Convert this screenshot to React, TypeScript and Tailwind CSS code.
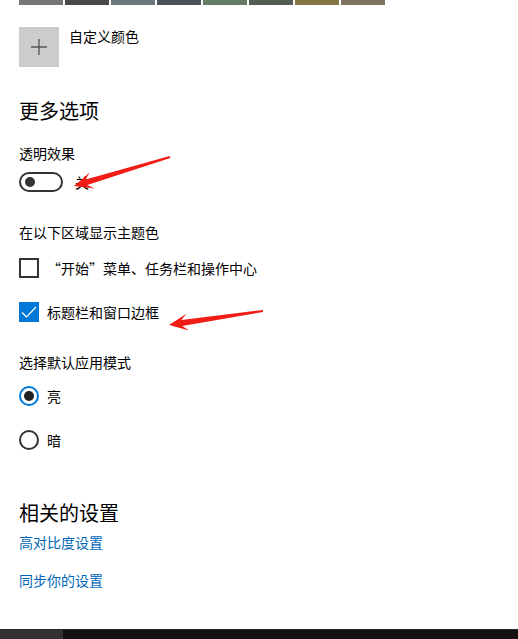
import React from 'react'

const swatches = ['#767676', '#4c4a48', '#69797e', '#4a5459', '#647c64', '#525e54', '#847545', '#7e735f']

// 红色手绘箭头：从尾部细线到箭头尖
function arrowPoints(tx: number, ty: number, hx: number, hy: number) {
  const len = Math.hypot(hx - tx, hy - ty)
  const dx = (hx - tx) / len
  const dy = (hy - ty) / len
  const nx = -dy
  const ny = dx
  const p = (x: number, y: number, back: number, side: number) =>
    `${(x - dx * back + nx * side).toFixed(1)},${(y - dy * back + ny * side).toFixed(1)}`
  return [
    p(tx, ty, 0, 1),
    p(hx, hy, 13, 3),
    p(hx, hy, 19, 8.5),
    p(hx, hy, 0, 0),
    p(hx, hy, 19, -8.5),
    p(hx, hy, 13, -3),
    p(tx, ty, 0, -1),
  ].join(' ')
}

function Toggle() {
  return (
    <div className="w-[44px] h-[20px] rounded-full border-2 border-[#333] flex items-center px-[4px]">
      <div className="w-[10px] h-[10px] rounded-full bg-[#333]" />
    </div>
  )
}

function Checkbox({ checked }: { checked?: boolean }) {
  if (checked) {
    return (
      <div className="w-[20px] h-[20px] bg-[#0078d7] flex items-center justify-center">
        <svg width="18" height="18" viewBox="0 0 18 18">
          <path d="M2 9.5 L6.5 14 L16 4" fill="none" stroke="white" strokeWidth="1.2" />
        </svg>
      </div>
    )
  }
  return <div className="w-[20px] h-[20px] border-2 border-[#333]" />
}

function Radio({ checked }: { checked?: boolean }) {
  return (
    <div
      className={
        checked
          ? 'w-[20px] h-[20px] rounded-full border-2 border-[#0078d7] flex items-center justify-center'
          : 'w-[20px] h-[20px] rounded-full border-2 border-[#333]'
      }
    >
      {checked && <div className="w-[10px] h-[10px] rounded-full bg-[#222]" />}
    </div>
  )
}

export default function App() {
  return (
    <div
      className="relative w-[518px] h-[639px] bg-white overflow-hidden text-black flex flex-col"
      style={{ fontFamily: '"Noto Sans CJK SC", "Noto Sans", sans-serif' }}
    >
      <div className="px-[19px] flex-1">
        {/* 颜色块 */}
        <div className="flex gap-[2px]">
          {swatches.map((c) => (
            <div key={c} className="w-[44px] h-[5px]" style={{ backgroundColor: c }} />
          ))}
        </div>

        {/* 自定义颜色 */}
        <div className="mt-[22px] flex items-start gap-[10px]">
          <div className="w-[40px] h-[40px] bg-[#cccccc] flex items-center justify-center">
            <svg width="18" height="18" viewBox="0 0 18 18">
              <path d="M9 1 V17 M1 9 H17" stroke="#555" strokeWidth="1.3" />
            </svg>
          </div>
          <span className="text-[14px] leading-[20px] -mt-[1px]">自定义颜色</span>
        </div>

        {/* 更多选项 */}
        <h2 className="mt-[30px] text-[20px] leading-[28px] font-normal">更多选项</h2>
        <div className="mt-[18px] text-[14px] leading-[20px]">透明效果</div>
        <div className="mt-[9px] flex items-center gap-[12px]">
          <Toggle />
          <span className="text-[14px] leading-[20px]">关</span>
        </div>

        <div className="mt-[30px] text-[14px] leading-[20px]">在以下区域显示主题色</div>
        <div className="mt-[16px] flex items-center gap-[8px]">
          <Checkbox />
          <span className="text-[14px] leading-[20px]">“开始”菜单、任务栏和操作中心</span>
        </div>
        <div className="mt-[24px] flex items-center gap-[8px]">
          <Checkbox checked />
          <span className="text-[14px] leading-[20px]">标题栏和窗口边框</span>
        </div>

        <div className="mt-[30px] text-[14px] leading-[20px]">选择默认应用模式</div>
        <div className="mt-[14px] flex items-center gap-[8px]">
          <Radio checked />
          <span className="text-[14px] leading-[20px]">亮</span>
        </div>
        <div className="mt-[24px] flex items-center gap-[8px]">
          <Radio />
          <span className="text-[14px] leading-[20px]">暗</span>
        </div>

        {/* 相关的设置 */}
        <h2 className="mt-[49px] text-[20px] leading-[28px] font-normal">相关的设置</h2>
        <div className="mt-[5px] text-[14px] leading-[20px] text-[#0067b8]">高对比度设置</div>
        <div className="mt-[18px] text-[14px] leading-[20px] text-[#0067b8]">同步你的设置</div>
      </div>

      {/* 底部任务栏 */}
      <div className="h-[10px] flex border-t border-[#1e2a28]">
        <div className="w-[63px] bg-[#333131]" />
        <div className="flex-1 bg-[#131111]" />
      </div>

      {/* 标注箭头 */}
      <svg className="absolute inset-0 pointer-events-none" width="518" height="639">
        <polygon points={arrowPoints(170, 157, 74, 186)} fill="#f01d16" />
        <polygon points={arrowPoints(263, 311, 169, 325)} fill="#f01d16" />
      </svg>
    </div>
  )
}
